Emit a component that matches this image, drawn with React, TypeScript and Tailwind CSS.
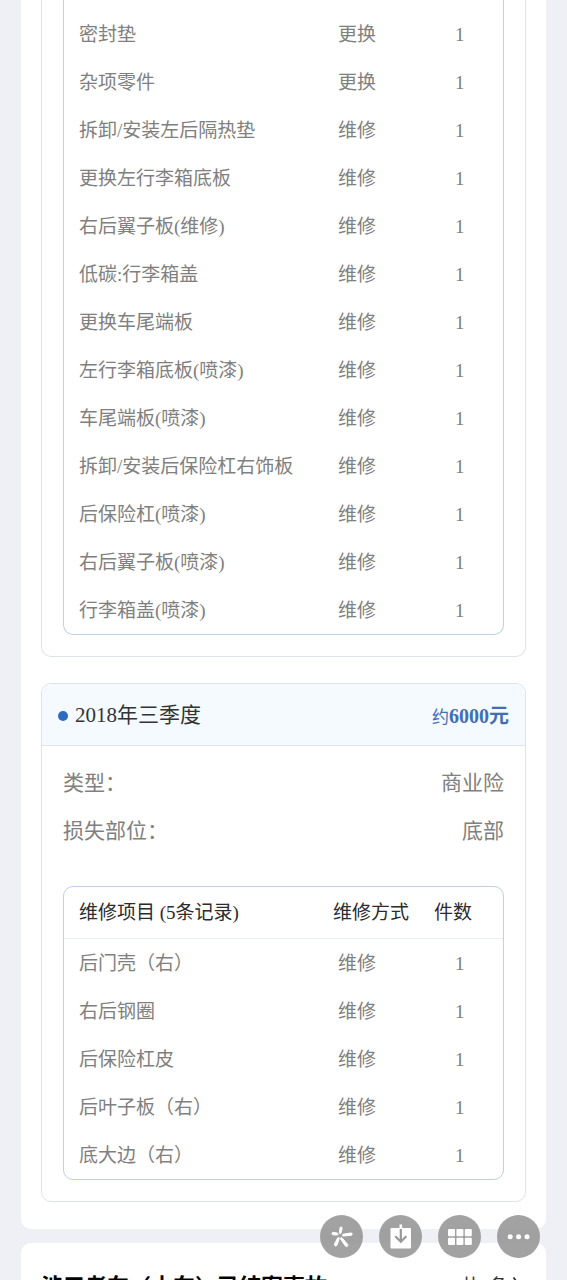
import React from 'react';

type Item = { name: string; method: string; count: number };

const earlierItems: Item[] = [
  { name: '密封垫', method: '更换', count: 1 },
  { name: '杂项零件', method: '更换', count: 1 },
  { name: '拆卸/安装左后隔热垫', method: '维修', count: 1 },
  { name: '更换左行李箱底板', method: '维修', count: 1 },
  { name: '右后翼子板(维修)', method: '维修', count: 1 },
  { name: '低碳:行李箱盖', method: '维修', count: 1 },
  { name: '更换车尾端板', method: '维修', count: 1 },
  { name: '左行李箱底板(喷漆)', method: '维修', count: 1 },
  { name: '车尾端板(喷漆)', method: '维修', count: 1 },
  { name: '拆卸/安装后保险杠右饰板', method: '维修', count: 1 },
  { name: '后保险杠(喷漆)', method: '维修', count: 1 },
  { name: '右后翼子板(喷漆)', method: '维修', count: 1 },
  { name: '行李箱盖(喷漆)', method: '维修', count: 1 },
];

const quarterItems: Item[] = [
  { name: '后门壳（右）', method: '维修', count: 1 },
  { name: '右后钢圈', method: '维修', count: 1 },
  { name: '后保险杠皮', method: '维修', count: 1 },
  { name: '后叶子板（右）', method: '维修', count: 1 },
  { name: '底大边（右）', method: '维修', count: 1 },
];

function RepairTable({ items, heading }: { items: Item[]; heading?: string }) {
  return (
    <table className="w-full table-fixed border-separate border-spacing-0 text-left text-[19px] leading-7">
      <colgroup>
        <col />
        <col className="w-[100px]" />
        <col className="w-[78px]" />
      </colgroup>
      {heading && (
        <thead className="text-[#2b2b2b]">
          <tr className="h-[52px]">
            <th scope="col" className="border-b border-[#ebeef1] pl-[15px] font-normal">{heading}</th>
            <th scope="col" className="border-b border-[#ebeef1] pl-2 font-normal">维修方式</th>
            <th scope="col" className="border-b border-[#ebeef1] pl-[9px] font-normal">件数</th>
          </tr>
        </thead>
      )}
      <tbody className="text-[#808080]">
        {items.map((item) => (
          <tr key={item.name} className="h-12">
            <td className="pt-[2px] pl-[15px] whitespace-nowrap">{item.name}</td>
            <td className="pt-[2px] pl-[13px]">{item.method}</td>
            <td className="pt-[2px] pl-[30px]">{item.count}</td>
          </tr>
        ))}
      </tbody>
    </table>
  );
}

function ToolButton({ label, children }: { label: string; children: React.ReactNode }) {
  return (
    <button
      type="button"
      aria-label={label}
      className="flex size-[43px] items-center justify-center rounded-full bg-[#929292]/85"
    >
      {children}
    </button>
  );
}

export default function App() {
  return (
    <main className="h-screen overflow-y-auto bg-[#eff0f6] px-[21px] font-['Liberation_Serif','Noto_Sans_CJK_SC',serif] [scrollbar-width:none]">
      <section className="rounded-b-[10px] bg-white px-5 pb-[27px]">
        <article className="rounded-b-[10px] border border-t-0 border-[#dfe3e9] px-[21px] pb-[21px]">
          <div className="rounded-b-[10px] border border-t-0 border-[#bdd2e6] pt-[10px]">
            <RepairTable items={earlierItems} />
          </div>
        </article>

        <article className="mt-[26px] overflow-hidden rounded-[10px] border border-[#dfe3e9]">
          <header className="flex h-[62px] items-center justify-between border-b border-[#dfe5ea] bg-[#f4faff] px-4 pt-[2px]">
            <h2 className="flex items-center gap-[7px] text-[21px] text-[#333333]">
              <span className="size-[10px] rounded-full bg-[#2f6bc0]" />
              2018年三季度
            </h2>
            <p className="text-[17px] text-[#3f6fb5]">
              约<strong className="text-[20px] font-bold">6000元</strong>
            </p>
          </header>
          <div className="px-[21px] pt-[14px] pb-[21px]">
            <dl className="text-[21px] text-[#808080]">
              <div className="flex h-12 items-center justify-between">
                <dt>类型：</dt>
                <dd>商业险</dd>
              </div>
              <div className="flex h-12 items-center justify-between">
                <dt>损失部位：</dt>
                <dd>底部</dd>
              </div>
            </dl>
            <div className="mt-[30px] rounded-[10px] border border-[#bdd2e6]">
              <RepairTable items={quarterItems} heading="维修项目 (5条记录)" />
            </div>
          </div>
        </article>
      </section>

      <section className="mt-[14px] flex items-center justify-between rounded-[10px] bg-white px-5 pt-7 pb-6">
        <h2 className="text-[22px] leading-8 font-bold text-black">涉三者车（本车）已结案事故</h2>
        <span className="flex items-center gap-1 pr-1 text-[19px] leading-8 text-[#333333]">
          共1条
          <svg viewBox="0 0 10 20" className="h-5 w-[10px]" fill="none" stroke="currentColor" strokeWidth="1.8">
            <path d="M1.5 0.5l7 9.5-7 9.5" />
          </svg>
        </span>
      </section>

      <nav aria-label="工具" className="fixed right-[27px] bottom-[22px] flex gap-4">
        <ToolButton label="识别">
          <svg viewBox="0 0 43 43" className="size-full" fill="white" stroke="white" strokeWidth="1" strokeLinejoin="round">
            <path d="M20 12.8q.4-1.2 1.4-.8 1 .3.8 1.4l-1.2 4.6q-.3.8-1 .6-.7-.1-.6-1z" />
            <path d="M12 18.4q.2-1.3 1.6-1.1l3.8.9q.9.3.7 1-.2.8-1.1.8l-3.9-.2q-1.1-.1-1.1-1.4z" />
            <path d="M22.4 20.3q0-.8.8-1.1l7.6-1.2q1.3-.1 1.4.9.1 1.2-1.2 1.4l-7.7.7q-.9 0-.9-.7z" />
            <path d="M18.6 22.4q.9.2.7 1.1l-2.3 6.6q-.6 1.2-1.8.8-1.1-.5-.7-1.8l3.1-6.1q.4-.7 1-.6z" />
            <path d="M20.8 22.8q.7-.6 1.3.1l5.5 6.5q.8 1.1-.2 1.9-1.1.7-2.1-.4l-4.7-6.8q-.4-.8.2-1.3z" />
          </svg>
        </ToolButton>
        <ToolButton label="保存">
          <svg viewBox="0 0 43 43" className="size-full" fill="none">
            <rect x="11.5" y="13" width="20.5" height="20.5" rx="1" fill="white" />
            <path d="M21.8 9.5v4" stroke="white" strokeWidth="2.6" />
            <path d="M21.8 14v12M16.3 21.2l5.5 5.5 5.5-5.5" stroke="#979797" strokeWidth="2.2" />
          </svg>
        </ToolButton>
        <ToolButton label="应用">
          <svg viewBox="0 0 43 43" className="size-full" fill="white">
            <rect x="10" y="14" width="7" height="7.2" rx="1" />
            <rect x="18.4" y="14" width="7" height="7.2" rx="1" />
            <rect x="26.8" y="14" width="7" height="7.2" rx="1" />
            <rect x="10" y="22.8" width="7" height="7.2" rx="1" />
            <rect x="18.4" y="22.8" width="7" height="7.2" rx="1" />
            <rect x="26.8" y="22.8" width="7" height="7.2" rx="1" />
          </svg>
        </ToolButton>
        <ToolButton label="更多">
          <svg viewBox="0 0 43 43" className="size-full" fill="white">
            <circle cx="13.2" cy="21.7" r="2.5" />
            <circle cx="21.6" cy="21.7" r="2.5" />
            <circle cx="30" cy="21.7" r="2.5" />
          </svg>
        </ToolButton>
      </nav>
    </main>
  );
}
